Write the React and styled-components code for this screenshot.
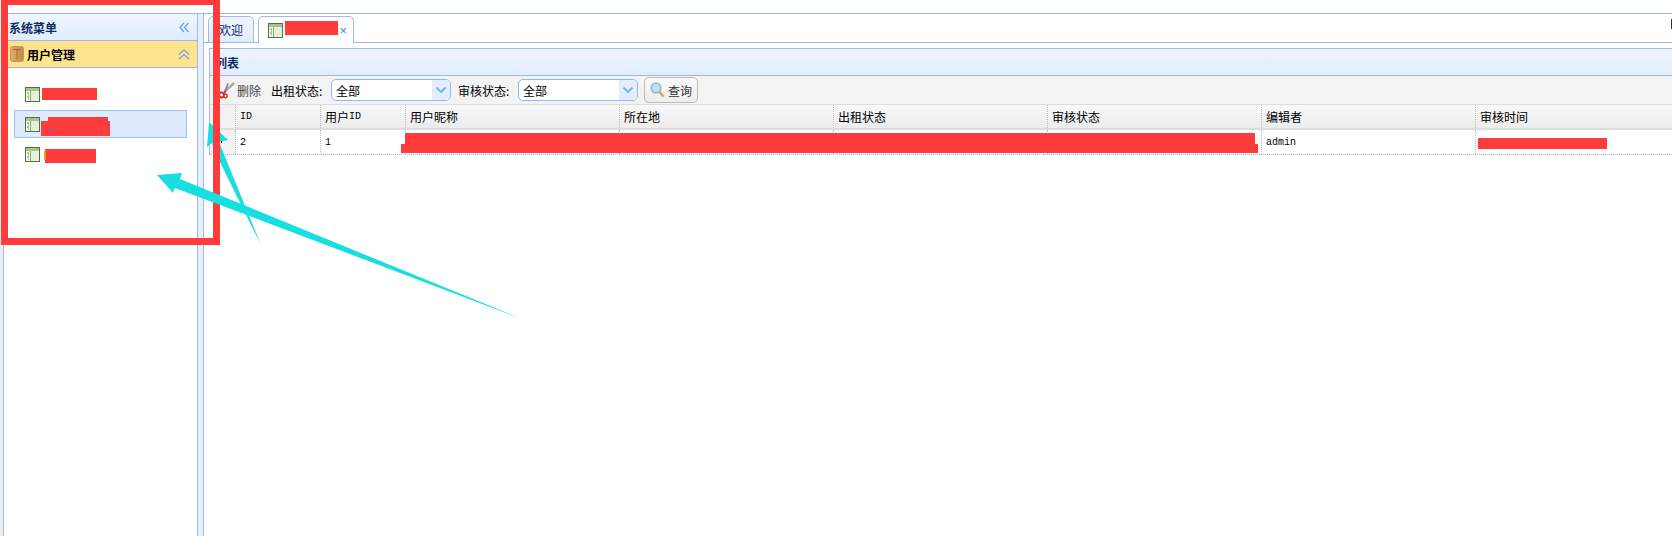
import React from "react";
import styled, { createGlobalStyle } from "styled-components";

const Global = createGlobalStyle`
  html, body { margin: 0; padding: 0; background: #fff; }
  body { font: 12px "Noto Sans CJK SC", "Liberation Sans", sans-serif; color: #000; overflow: hidden; }
  * { box-sizing: border-box; }
`;

const LINE = "#9dbbe6";

const Page = styled.div`
  position: relative;
  width: 1672px;
  height: 536px;
  padding-top: 13px;
  overflow: hidden;
`;
const Gutter = styled.div`
  position: absolute;
  left: 0;
  top: 0;
  bottom: 0;
  width: 3px;
  background: #eeeeee;
`;
const Layout = styled.div`
  display: flex;
  height: 100%;
  margin-left: 3px;
  border-top: 1px solid ${LINE};
`;
const Sidebar = styled.aside`
  width: 195px;
  flex: none;
  border-left: 1px solid ${LINE};
  border-right: 1px solid ${LINE};
`;
const SideHeader = styled.div`
  height: 27px;
  display: flex;
  align-items: center;
  justify-content: space-between;
  padding: 0 8px 0 5px;
  background: linear-gradient(#eff5ff, #e0ecff);
  border-bottom: 1px solid ${LINE};
  font-weight: 700;
  color: #0e2d5f;
`;
const AccordionHeader = styled.div`
  height: 27px;
  display: flex;
  align-items: center;
  justify-content: space-between;
  padding: 0 7px 0 7px;
  background: #ffe48d;
  border-bottom: 1px solid ${LINE};
  font-weight: 700;
  color: #000;
`;
const AccordionTitle = styled.div`
  display: flex;
  align-items: center;
  gap: 3px;
  margin-left: -1px;
`;
const MenuList = styled.div`
  padding: 12px 10px 0 10px;
  display: flex;
  flex-direction: column;
  gap: 2px;
`;
const MenuItem = styled.div`
  height: 28px;
  padding-left: 10px;
  display: flex;
  align-items: center;
  border: 1px solid ${(p) => (p.$active ? "#9cc0ee" : "transparent")};
  background: ${(p) => (p.$active ? "#deeafe" : "transparent")};
`;
const Splitter = styled.div`
  width: 5px;
  flex: none;
  background: #e6effc;
`;
const Main = styled.main`
  flex: 1;
  min-width: 0;
  border-left: 1px solid ${LINE};
`;
const TabStrip = styled.div`
  height: 29px;
  padding: 2px 0 0 4px;
  display: flex;
  gap: 4px;
  border-bottom: 1px solid ${LINE};
`;
const Tab = styled.div`
  height: 27px;
  width: ${(p) => p.$w}px;
  display: flex;
  align-items: center;
  padding-left: ${(p) => p.$pad}px;
  border: 1px solid ${LINE};
  border-bottom: ${(p) => (p.$active ? "none" : `1px solid ${LINE}`)};
  border-radius: 5px 5px 0 0;
  background: ${(p) => (p.$active ? "#fff" : "linear-gradient(#eff5ff, #e0ecff)")};
  color: #0e2d5f;
`;
const TabClose = styled.span`
  margin-left: auto;
  margin-right: 6px;
  font: 13px "Liberation Sans", sans-serif;
  color: #5a7fb5;
`;
const EdgeMark = styled.div`
  margin: 3px 0 0 auto;
  width: 1px;
  height: 10px;
  background: #333;
`;
const Panel = styled.section`
  margin: 5px 0 0 5px;
  border-left: 1px solid ${LINE};
  border-top: 1px solid ${LINE};
`;
const PanelHeader = styled.div`
  height: 27px;
  padding-left: 5px;
  display: flex;
  align-items: center;
  background: linear-gradient(#eff5ff, #e0ecff);
  border-bottom: 1px solid ${LINE};
  font-weight: 700;
  color: #0e2d5f;
`;
const Toolbar = styled.div`
  height: 28px;
  display: flex;
  align-items: center;
  padding-left: 8px;
  background: #f3f3f3;
`;
const DeleteButton = styled.div`
  display: flex;
  align-items: center;
  gap: 2px;
  width: 53px;
  color: #444;
`;
const FieldLabel = styled.span`
  width: ${(p) => p.$w}px;
  white-space: nowrap;
`;
const Select = styled.div`
  width: 120px;
  height: 22px;
  margin-right: 7px;
  display: flex;
  align-items: center;
  justify-content: space-between;
  padding-left: 4px;
  background: #fff;
  border: 1px solid #8fbcf0;
  border-radius: 5px;
  overflow: hidden;
`;
const SelectArrow = styled.span`
  width: 18px;
  height: 100%;
  display: flex;
  align-items: center;
  justify-content: center;
  background: #e3eefd;
`;
const SearchButton = styled.div`
  width: 54px;
  height: 26px;
  margin-left: -1px;
  display: flex;
  align-items: center;
  gap: 3px;
  padding-left: 5px;
  border: 1px solid #bbb;
  border-radius: 5px;
  background: linear-gradient(#fafafa, #ededed);
  color: #333;
`;
const Row = styled.div`
  display: grid;
  grid-template-columns: 26px 85px 85px 214px 214px 214px 214px 214px 1fr;
`;
const HeadRow = styled(Row)`
  height: 26px;
  border-top: 1px solid #dddddd;
  border-bottom: 2px solid #dddddd;
  background: linear-gradient(#f9f9f9, #ececec);
`;
const BodyRow = styled(Row)`
  height: 25px;
  border-bottom: 1px dotted #bbb;
`;
const Cell = styled.div`
  padding-left: 4px;
  display: flex;
  align-items: center;
  border-right: 1px dotted #bbb;
  white-space: nowrap;
  &:last-child { border-right: none; }
`;
const RowNum = styled(Cell)`
  background: #f2f2f2;
  justify-content: center;
  padding-left: 0;
`;
const Latin = styled.span`
  font: 10px "Liberation Mono", monospace;
`;
const Annotations = styled.svg`
  position: absolute;
  left: 0;
  top: 0;
  pointer-events: none;
`;

const TableIcon = () => (
  <svg width="15" height="15" viewBox="0 0 15 15">
    <rect x="0.5" y="0.5" width="14" height="14" fill="#e6f0dd" stroke="#56703a" />
    <rect x="1" y="1" width="13" height="3" fill="#a9c58a" />
    <rect x="1" y="4" width="4" height="10" fill="#f7fbf2" />
    <path d="M5.5 4v10" stroke="#8aa76a" />
    <path d="M2 6h2M3 8h1M2 10h2M3 12h1" stroke="#6d8f4c" />
  </svg>
);
const FolderIcon = () => (
  <svg width="14" height="16" viewBox="0 0 14 16">
    <defs>
      <linearGradient id="box" x1="0" y1="0" x2="1" y2="0">
        <stop offset="0" stopColor="#e3ad6b" />
        <stop offset="1" stopColor="#c48a48" />
      </linearGradient>
    </defs>
    <rect x="0.5" y="0.5" width="13" height="15" rx="2" fill="url(#box)" stroke="#bd9a68" />
    <path d="M3 3.5h8M7 3.5v10" stroke="#9a6a32" fill="none" />
  </svg>
);
const DoubleLeft = () => (
  <svg width="10" height="11" viewBox="0 0 10 11" fill="none" stroke="#6aa5e6" strokeWidth="1.3">
    <path d="M5 1L1 5.5 5 10M9.5 1L5.5 5.5 9.5 10" />
  </svg>
);
const DoubleUp = () => (
  <svg width="12" height="11" viewBox="0 0 12 11" fill="none" stroke="#6aa5e6" strokeWidth="1.3">
    <path d="M1 5.5L6 1l5 4.5M1 10l5-4.5 5 4.5" />
  </svg>
);
const ChevronDown = () => (
  <svg width="12" height="8" viewBox="0 0 12 8" fill="none" stroke="#76b6f2" strokeWidth="2.2">
    <path d="M1.5 1.5L6 6l4.5-4.5" />
  </svg>
);
const Scissors = () => (
  <svg width="17" height="17" viewBox="0 0 17 17" fill="none">
    <path d="M16 1L8 8.5" stroke="#a8a8a8" strokeWidth="2.4" />
    <path d="M10 1.5L7 9" stroke="#8a8a8a" strokeWidth="1.8" />
    <path d="M8 8.5L5 12M7 9l-.5 3" stroke="#c9342f" strokeWidth="1.6" />
    <circle cx="3.5" cy="13" r="2.4" fill="#fff" stroke="#c9342f" strokeWidth="2" />
    <circle cx="7.5" cy="14" r="1.7" fill="#fff" stroke="#c9342f" strokeWidth="1.5" />
  </svg>
);
const Magnifier = () => (
  <svg width="15" height="16" viewBox="0 0 15 16" fill="none">
    <circle cx="6" cy="6" r="4.7" fill="#bfe0f8" stroke="#8fb4d2" strokeWidth="1.6" />
    <path d="M9.6 10l4 4.5" stroke="#e0a050" strokeWidth="2.6" />
  </svg>
);

const columns = ["ID", "用户ID", "用户昵称", "所在地", "出租状态", "审核状态", "编辑者", "审核时间"];
const labelParts = (t) => {
  const m = t.match(/^(.*?)(ID)?$/);
  return (
    <>
      {m[1]}
      {m[2] && <Latin>{m[2]}</Latin>}
    </>
  );
};

export default function App() {
  return (
    <Page>
      <Global />
      <Gutter />
      <Layout>
        <Sidebar>
          <SideHeader>
            <span>系统菜单</span>
            <DoubleLeft />
          </SideHeader>
          <AccordionHeader>
            <AccordionTitle>
              <FolderIcon />
              <span>用户管理</span>
            </AccordionTitle>
            <DoubleUp />
          </AccordionHeader>
          <MenuList>
            <MenuItem><TableIcon /></MenuItem>
            <MenuItem $active><TableIcon /></MenuItem>
            <MenuItem><TableIcon /></MenuItem>
          </MenuList>
        </Sidebar>
        <Splitter />
        <Main>
          <TabStrip>
            <Tab $w={46} $pad={10}>欢迎</Tab>
            <Tab $active $w={96} $pad={9}>
              <TableIcon />
              <TabClose>×</TabClose>
            </Tab>
            <EdgeMark />
          </TabStrip>
          <Panel>
            <PanelHeader>列表</PanelHeader>
            <Toolbar>
              <DeleteButton>
                <Scissors />
                <span>删除</span>
              </DeleteButton>
              <FieldLabel $w={60}>出租状态:</FieldLabel>
              <Select>
                全部
                <SelectArrow><ChevronDown /></SelectArrow>
              </Select>
              <FieldLabel $w={60}>审核状态:</FieldLabel>
              <Select>
                全部
                <SelectArrow><ChevronDown /></SelectArrow>
              </Select>
              <SearchButton>
                <Magnifier />
                <span>查询</span>
              </SearchButton>
            </Toolbar>
            <HeadRow>
              <RowNum />
              {columns.map((c) => (
                <Cell key={c}>{labelParts(c)}</Cell>
              ))}
            </HeadRow>
            <BodyRow>
              <RowNum />
              <Cell><Latin>2</Latin></Cell>
              <Cell><Latin>1</Latin></Cell>
              <Cell />
              <Cell />
              <Cell />
              <Cell />
              <Cell><Latin>admin</Latin></Cell>
              <Cell />
            </BodyRow>
          </Panel>
        </Main>
      </Layout>
      <Annotations width="1672" height="536" viewBox="0 0 1672 536">
        <g fill="#ff3b3b">
          <rect x="285" y="21" width="53" height="14" />
          <rect x="42" y="88" width="55" height="12" />
          <rect x="48" y="117" width="60" height="5" />
          <rect x="41" y="121" width="69" height="15" />
          <rect x="45" y="149" width="51" height="14" />
          <rect x="405" y="133" width="850" height="11" />
          <rect x="401" y="144" width="857" height="9" />
          <rect x="1478" y="138" width="129" height="11" />
        </g>
        <rect x="48" y="128" width="7" height="1" fill="#4a78c8" />
        <rect x="44" y="151" width="2" height="9" fill="#e0a030" />
        <rect x="221" y="141" width="1" height="2" fill="#222" />
        <polygon fill="#17dfdf" points="209,122 228,140 219,142 261,245 214,150 212,143 207,147" />
        <rect x="221" y="141" width="1" height="2" fill="#222" />
        <path fill="#ff3b3b" fillRule="evenodd" d="M1 0H220V245H1ZM8 5V238H213V5Z" />
        <polygon fill="#17dfdf" points="157,175 182,173 180,179 522,319 175,188 173,193" />
      </Annotations>
    </Page>
  );
}
